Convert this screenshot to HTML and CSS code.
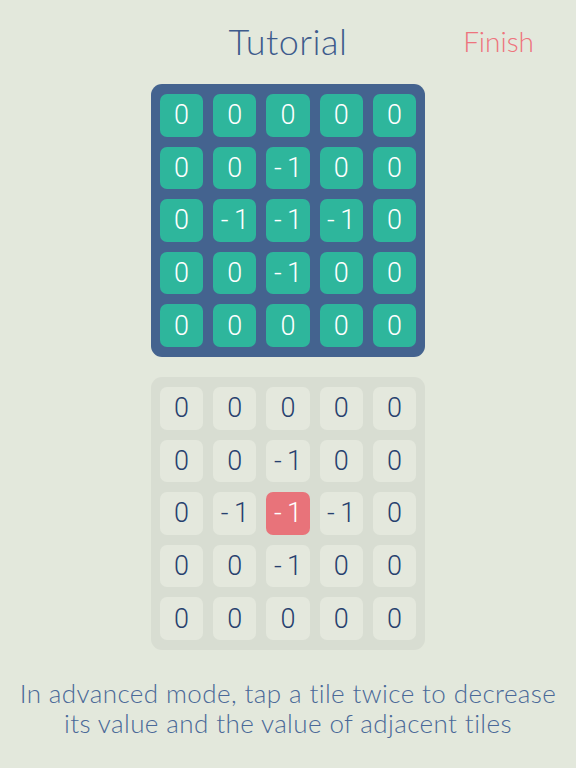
FILE: index.html
```html
<!DOCTYPE html>
<html lang="en">
<head>
  <meta charset="UTF-8">
  <meta name="viewport" content="width=device-width, initial-scale=1.0">
  <title>Tutorial</title>
  <link rel="stylesheet" href="styles.css">
</head>
<body>
  <div id="header">
    <div></div>
    <h1>Tutorial</h1>
    <div class="finish">Finish</div>
  </div>

  <div class="board goal" id="goal"></div>
  <div class="board play" id="play"></div>

  <p id="hint">In advanced mode, tap a tile twice to decrease its value and the value of adjacent tiles</p>

  <script>
    const grid = [
      [0, 0, 0, 0, 0],
      [0, 0, -1, 0, 0],
      [0, -1, -1, -1, 0],
      [0, 0, -1, 0, 0],
      [0, 0, 0, 0, 0]
    ];

    function render(el, active) {
      grid.forEach((row, r) => {
        row.forEach((v, c) => {
          const tile = document.createElement('div');
          tile.className = 'tile';
          if (active && r === active[0] && c === active[1]) tile.classList.add('active');
          // negative values get a little gap after the minus sign
          tile.textContent = v < 0 ? '-\u20091' : v;
          el.appendChild(tile);
        });
      });
    }

    render(document.getElementById('goal'));
    render(document.getElementById('play'), [2, 2]);
  </script>
</body>
</html>
```

FILE: styles.css
```css
/* Page */
body {
  margin: 0;
  background-color: #e3e8dc;
  font-family: "Lato", "Open Sans", sans-serif;
  font-weight: 300;
  display: flex;
  flex-direction: column;
  align-items: center;
}

/* Header: title centred, finish on the right */
#header {
  width: 100%;
  display: grid;
  grid-template-columns: 1fr auto 1fr;
  align-items: center;
  height: 84px;
  box-sizing: border-box;
  padding: 0 42px 2px;
}
h1 {
  margin: 0;
  font-size: 36px;
  font-weight: 300;
  letter-spacing: 0.5px;
  color: #3e5b8c;
}
.finish {
  justify-self: end;
  font-size: 28px;
  color: #ee737d;
}

/* Boards */
.board {
  width: 274px;
  height: 273px;
  box-sizing: border-box;
  padding: 10px 9px;
  border-radius: 11px;
  display: grid;
  grid-template-columns: repeat(5, 1fr);
  grid-template-rows: repeat(5, 1fr);
  gap: 10px;
}
.goal { background-color: #44638f; }
.play {
  background-color: #d8ddd2;
  margin-top: 20px;
}

/* Tiles */
.tile {
  border-radius: 7px;
  display: flex;
  align-items: center;
  justify-content: center;
  font-family: "Roboto", "Liberation Sans", sans-serif;
  font-weight: 300;
  font-size: 27px;
}
.goal .tile {
  background-color: #2eb69c;
  color: #fff;
}
.play .tile {
  background-color: #e4e8dd;
  color: #27406e;
}
.play .tile.active {
  background-color: #e8737a;
  color: #fff;
}

/* Hint text */
#hint {
  margin: 28px 0 0;
  text-align: center;
  font-size: 26px;
  letter-spacing: 0.4px;
  line-height: 30px;
  color: #4a6998;
  width: 545px;
}
```
